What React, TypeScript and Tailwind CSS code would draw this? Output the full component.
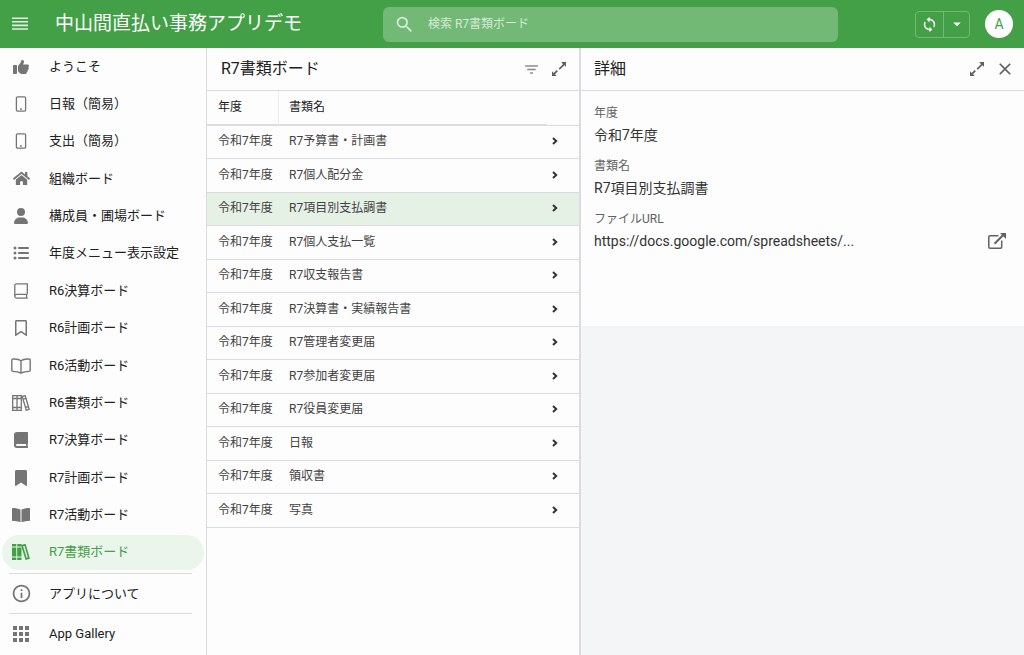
import { useState } from 'react';
import type { ReactNode } from 'react';
import { FaHome } from 'react-icons/fa';
import { FaBookmark, FaListUl, FaRegBookmark, FaThumbsUp, FaUser } from 'react-icons/fa6';
import { MdArrowDropDown, MdClose, MdFilterList, MdInfoOutline, MdSearch, MdSync } from 'react-icons/md';

interface NavItem {
    label: string;
    icon: ReactNode;
}

interface DocumentRow {
    year: string;
    name: string;
}

const documents: DocumentRow[] = [
    { year: '令和7年度', name: 'R7予算書・計画書' },
    { year: '令和7年度', name: 'R7個人配分金' },
    { year: '令和7年度', name: 'R7項目別支払調書' },
    { year: '令和7年度', name: 'R7個人支払一覧' },
    { year: '令和7年度', name: 'R7収支報告書' },
    { year: '令和7年度', name: 'R7決算書・実績報告書' },
    { year: '令和7年度', name: 'R7管理者変更届' },
    { year: '令和7年度', name: 'R7参加者変更届' },
    { year: '令和7年度', name: 'R7役員変更届' },
    { year: '令和7年度', name: '日報' },
    { year: '令和7年度', name: '領収書' },
    { year: '令和7年度', name: '写真' },
];

function MenuIcon() {
    return (
        <svg width="16" height="14" viewBox="0 0 16 14" fill="none" stroke="currentColor" strokeWidth="1.6">
            <path d="M0 1.2h16M0 4.8h16M0 8.4h16M0 12h16" />
        </svg>
    );
}

function PhoneIcon() {
    return (
        <svg width="12" height="16" viewBox="0 0 12 16" fill="none" stroke="currentColor" strokeWidth="1.3">
            <rect x="1.4" y="0.8" width="9.2" height="14.4" rx="1.3" />
            <circle cx="6" cy="13" r="0.9" fill="currentColor" stroke="none" />
        </svg>
    );
}

function BookIcon({ filled = false }: { filled?: boolean }) {
    if (filled) {
        return (
            <svg width="14" height="16" viewBox="0 0 14 16" fill="currentColor" fillRule="evenodd">
                <path d="M3 0h10.3c.4 0 .7.3.7.7v10.6c0 .3-.1.5-.3.6-.1.5-.1 1.6 0 2.1.2.1.3.3.3.6v.7c0 .4-.3.7-.7.7H3a3 3 0 0 1-3-3V3a3 3 0 0 1 3-3zM3 12a1 1 0 0 0 0 2h9.1c-.1-.5-.1-1.500 0-2z" />
            </svg>
        );
    }
    return (
        <svg width="14" height="16" viewBox="0 0 14 16" fill="none" stroke="currentColor" strokeWidth="1.3">
            <path d="M13.300 11.300V.8H2.600A1.800 1.800 0 0 0 .8 2.600v10.600a2 2 0 0 0 2 2h10.900M.8 13.100a1.900 1.900 0 0 1 1.900-1.800h10.600M12.600 11.300v3.900" />
        </svg>
    );
}

function OpenBookIcon({ filled = false }: { filled?: boolean }) {
    if (filled) {
        return (
            <svg width="18" height="14" viewBox="0 0 18 14" fill="currentColor">
                <path d="M8.5 1.6C6.7.8 3.7.1.6.1.3.1 0 .4 0 .8v11.400c0 .4.3.7.7.7 2.600.1 5.700.4 7.400 1.100.2.1.4 0 .4-.3zM9.500 1.600C11.300.8 14.300.1 17.400.1c.3 0 .6.3.6.7v11.400c0 .4-.3.7-.7.7-2.600.1-5.700.4-7.400 1.100-.2.1-.4 0-.4-.3z" />
            </svg>
        );
    }
    return (
        <svg width="20" height="16" viewBox="0 0 20 16" fill="none" stroke="currentColor" strokeWidth="1.4" strokeLinejoin="round">
            <path d="M10 2.700C8.300 1.300 5 .8 2 1 1.200 1 .8 1.500.8 2.100v10.200c0 .6.4 1.100 1 1.100 3.200 0 6 .5 8.200 1.600 2.200-1.100 5-1.600 8.200-1.600.6 0 1-.5 1-1.100V2.100c0-.6-.4-1.100-1.200-1.100-3-.2-6.300.3-8 1.700zM10 2.700V15" />
        </svg>
    );
}

function BooksIcon({ filled = false }: { filled?: boolean }) {
    return (
        <svg width="18" height="16" viewBox="0 0 18 16" fill="none" stroke="currentColor" strokeWidth="1.3">
            {filled ? (
                <>
                    <path
                        d="M0 0h4.3v2.400H0zM0 3.500h4.300v9H0zM0 13.600h4.300V16H0zM5.200 0h4.300v2.400H5.200zM5.200 3.500h4.300v9H5.200zM5.200 13.600h4.300V16H5.200z"
                        fill="currentColor"
                        stroke="none"
                    />
                    <path d="M10 1.600l3-.8 3.900 13.300-2.800.8z" strokeWidth="1.7" />
                </>
            ) : (
                <path d="M.7.7h8.600v14.600H.7zM5 .7v14.600M.7 3.500h8.600M.7 12.500h8.600M10.200 1.500l3-.8 4 13.700-2.900.8zM10.900 4.200l3-.8M13.500 12.300l3-.8" />
            )}
        </svg>
    );
}

function GridIcon() {
    return (
        <svg width="16" height="16" viewBox="0 0 16 16" fill="none" stroke="currentColor" strokeWidth="4" strokeDasharray="4 2">
            <path d="M0 2h16M0 8h16M0 14h16" />
        </svg>
    );
}

function ExpandIcon() {
    return (
        <svg width="14" height="14" viewBox="0 0 14 14" fill="currentColor">
            <path d="M9.200 0H14v4.800l-1.600-1.600-4.600 4.600-1.200-1.200 4.400-4.400zM4.800 14H0V9.200l1.700 1.700 2.900-2.900 1.300 1.300L3 12.200z" />
        </svg>
    );
}

function ChevronIcon() {
    return (
        <svg width="6" height="8" viewBox="0 0 6 8" fill="none" stroke="currentColor" strokeWidth="2">
            <path d="M1 1l3.200 3L1 7" />
        </svg>
    );
}

function ExternalLinkIcon() {
    return (
        <svg width="18" height="16" viewBox="0 0 18 16" fill="none" stroke="currentColor" strokeWidth="1.5">
            <path d="M10.500 2.800H2A1.200 1.200 0 0 0 .8 4v10A1.200 1.200 0 0 0 2 15.200h10.500a1.200 1.200 0 0 0 1.200-1.200V7.500" />
            <path d="M6.500 10.800l8.500-8.500" strokeWidth="2" />
            <path d="M12 0h6v6z" fill="currentColor" stroke="none" />
        </svg>
    );
}

const navItems: NavItem[] = [
    { label: 'ようこそ', icon: <FaThumbsUp size={16} /> },
    { label: '日報（簡易）', icon: <PhoneIcon /> },
    { label: '支出（簡易）', icon: <PhoneIcon /> },
    { label: '組織ボード', icon: <FaHome size={17} /> },
    { label: '構成員・圃場ボード', icon: <FaUser size={16} /> },
    { label: '年度メニュー表示設定', icon: <FaListUl size={16} /> },
    { label: 'R6決算ボード', icon: <BookIcon /> },
    { label: 'R6計画ボード', icon: <FaRegBookmark size={16} /> },
    { label: 'R6活動ボード', icon: <OpenBookIcon /> },
    { label: 'R6書類ボード', icon: <BooksIcon /> },
    { label: 'R7決算ボード', icon: <BookIcon filled /> },
    { label: 'R7計画ボード', icon: <FaBookmark size={16} /> },
    { label: 'R7活動ボード', icon: <OpenBookIcon filled /> },
    { label: 'R7書類ボード', icon: <BooksIcon filled /> },
];

function NavLink({ item, active = false }: { item: NavItem; active?: boolean }) {
    return (
        <a
            href="#"
            className={`flex h-[35px] flex-1 items-center rounded-full pl-2 ${active ? 'bg-[#ebf5ec] text-[#43a047]' : 'text-[#212121]'}`}
        >
            <span className={`flex w-[22px] justify-center ${active ? 'text-[#43a047]' : 'text-[#757575]'}`}>{item.icon}</span>
            <span className="ml-[17px] whitespace-nowrap">{item.label}</span>
        </a>
    );
}

function Sidebar() {
    return (
        <nav className="flex flex-col border-r border-[#dadce0] pl-0.5 text-[13px] leading-4">
            <ul className="flex flex-1 flex-col">
                {navItems.map((item) => (
                    <li key={item.label} className="flex flex-1 items-center pr-0.5">
                        <NavLink item={item} active={item.label === 'R7書類ボード'} />
                    </li>
                ))}
            </ul>
            <div className="mt-0.5 mr-3.5 ml-[7px] border-t border-[#dadce0]" />
            <div className="flex h-[39px] items-center">
                <NavLink item={{ label: 'アプリについて', icon: <MdInfoOutline size={21} className="shrink-0" /> }} />
            </div>
            <div className="mr-3.5 ml-[7px] border-t border-[#dadce0]" />
            <div className="mb-0.5 flex h-[39px] items-center">
                <NavLink item={{ label: 'App Gallery', icon: <GridIcon /> }} />
            </div>
        </nav>
    );
}

function DocumentList() {
    const [selected, setSelected] = useState(2);

    return (
        <section className="border-r-2 border-[#dadce0]">
            <div className="flex h-[43px] items-center border-b border-[#dadce0] pr-[13px] pl-3.5">
                <h2 className="flex-1 text-base leading-5">R7書類ボード</h2>
                <button aria-label="絞り込み" className="text-[#8a8a8a]">
                    <MdFilterList size={17} />
                </button>
                <button aria-label="全画面表示" className="ml-3 text-[#616161]">
                    <ExpandIcon />
                </button>
            </div>
            <table className="w-full table-fixed border-separate border-spacing-0 text-left text-xs leading-4">
                <thead>
                    <tr className="h-[35px]">
                        <th className="w-[72px] border-r border-b-2 border-r-[#eeeeee] border-b-[#dadce0] pb-0.5 pl-[11px] font-normal">年度</th>
                        <th className="border-b-2 border-[#dadce0] pb-0.5 pl-2.5 font-normal">書類名</th>
                        <th className="w-8 border-b border-[#dadce0]" />
                    </tr>
                </thead>
                <tbody>
                    {documents.map((doc, index) => (
                        <tr
                            key={doc.name}
                            onClick={() => setSelected(index)}
                            className={`cursor-pointer odd:h-[33px] even:h-[34px] ${index === selected ? 'bg-[#e6f1e6]' : ''}`}
                        >
                            <td className="border-b border-[#dadce0] pb-0.5 pl-[11px] text-[#424242]">{doc.year}</td>
                            <td className="border-b border-[#dadce0] pb-0.5 pl-2.5 text-[#424242]">{doc.name}</td>
                            <td className="border-b border-[#dadce0] pb-0.5 pl-[5px] text-[#333333]">
                                <ChevronIcon />
                            </td>
                        </tr>
                    ))}
                </tbody>
            </table>
        </section>
    );
}

function Field({ label, value }: { label: string; value: string }) {
    return (
        <div className="min-w-0">
            <dt className="text-xs leading-4 text-[#616161]">{label}</dt>
            <dd className="mt-1 truncate text-sm leading-5 text-[#333333]">{value}</dd>
        </div>
    );
}

function DetailPanel() {
    return (
        <section className="min-w-0 bg-[#f4f5f7]">
            <div className="bg-[#fdfdfd] pb-[75px]">
                <div className="flex h-[43px] items-center border-b border-[#dadce0] pr-[9px] pl-[13px]">
                    <h2 className="flex-1 text-base leading-5">詳細</h2>
                    <button aria-label="全画面表示" className="text-[#616161]">
                        <ExpandIcon />
                    </button>
                    <button aria-label="閉じる" className="ml-[11px] text-[#616161]">
                        <MdClose size={20} />
                    </button>
                </div>
                <div className="flex items-end pt-3.5 pr-[18px] pl-[13px]">
                    <dl className="flex min-w-0 flex-1 flex-col gap-[13px]">
                        <Field label="年度" value="令和7年度" />
                        <Field label="書類名" value="R7項目別支払調書" />
                        <Field label="ファイルURL" value="https://docs.google.com/spreadsheets/..." />
                    </dl>
                    <a href="#" aria-label="ファイルを開く" className="mb-0.5 text-[#616161]">
                        <ExternalLinkIcon />
                    </a>
                </div>
            </div>
        </section>
    );
}

export default function App() {
    return (
        <div className="flex min-h-screen flex-col bg-[#fdfdfd] font-['Roboto','Noto_Sans_CJK_JP',sans-serif] text-[#212121]">
            <header className="flex h-12 items-center bg-[#43a047] text-white">
                <div className="flex w-[383px] items-center pl-3">
                    <button aria-label="メニュー" className="text-[#e3f1e3]">
                        <MenuIcon />
                    </button>
                    <h1 className="ml-[27px] text-[19px] leading-7 whitespace-nowrap">中山間直払い事務アプリデモ</h1>
                </div>
                <label className="flex h-[35px] flex-1 items-center rounded-md bg-[#72b976] pl-[11px]">
                    <MdSearch size={21} className="text-[#d6ead7]" />
                    <input
                        type="search"
                        aria-label="検索"
                        placeholder="検索 R7書類ボード"
                        className="ml-[13px] min-w-0 flex-1 text-xs leading-5 outline-none placeholder:text-[#d6ead7]"
                    />
                </label>
                <div className="flex w-[186px] items-center justify-end pr-[11px]">
                    <div className="flex h-[27px] rounded-sm border border-[#72b976]">
                        <button aria-label="同期" className="flex w-7 items-center justify-center border-r border-[#72b976]">
                            <MdSync size={17} />
                        </button>
                        <button aria-label="同期オプション" className="flex w-[25px] items-center justify-center">
                            <MdArrowDropDown size={18} />
                        </button>
                    </div>
                    <button className="ml-[15px] size-7 rounded-full bg-white text-sm leading-7 text-[#43a047]">A</button>
                </div>
            </header>
            <main className="grid flex-1 grid-cols-[207px_minmax(0,374fr)_minmax(0,443fr)]">
                <Sidebar />
                <DocumentList />
                <DetailPanel />
            </main>
        </div>
    );
}
